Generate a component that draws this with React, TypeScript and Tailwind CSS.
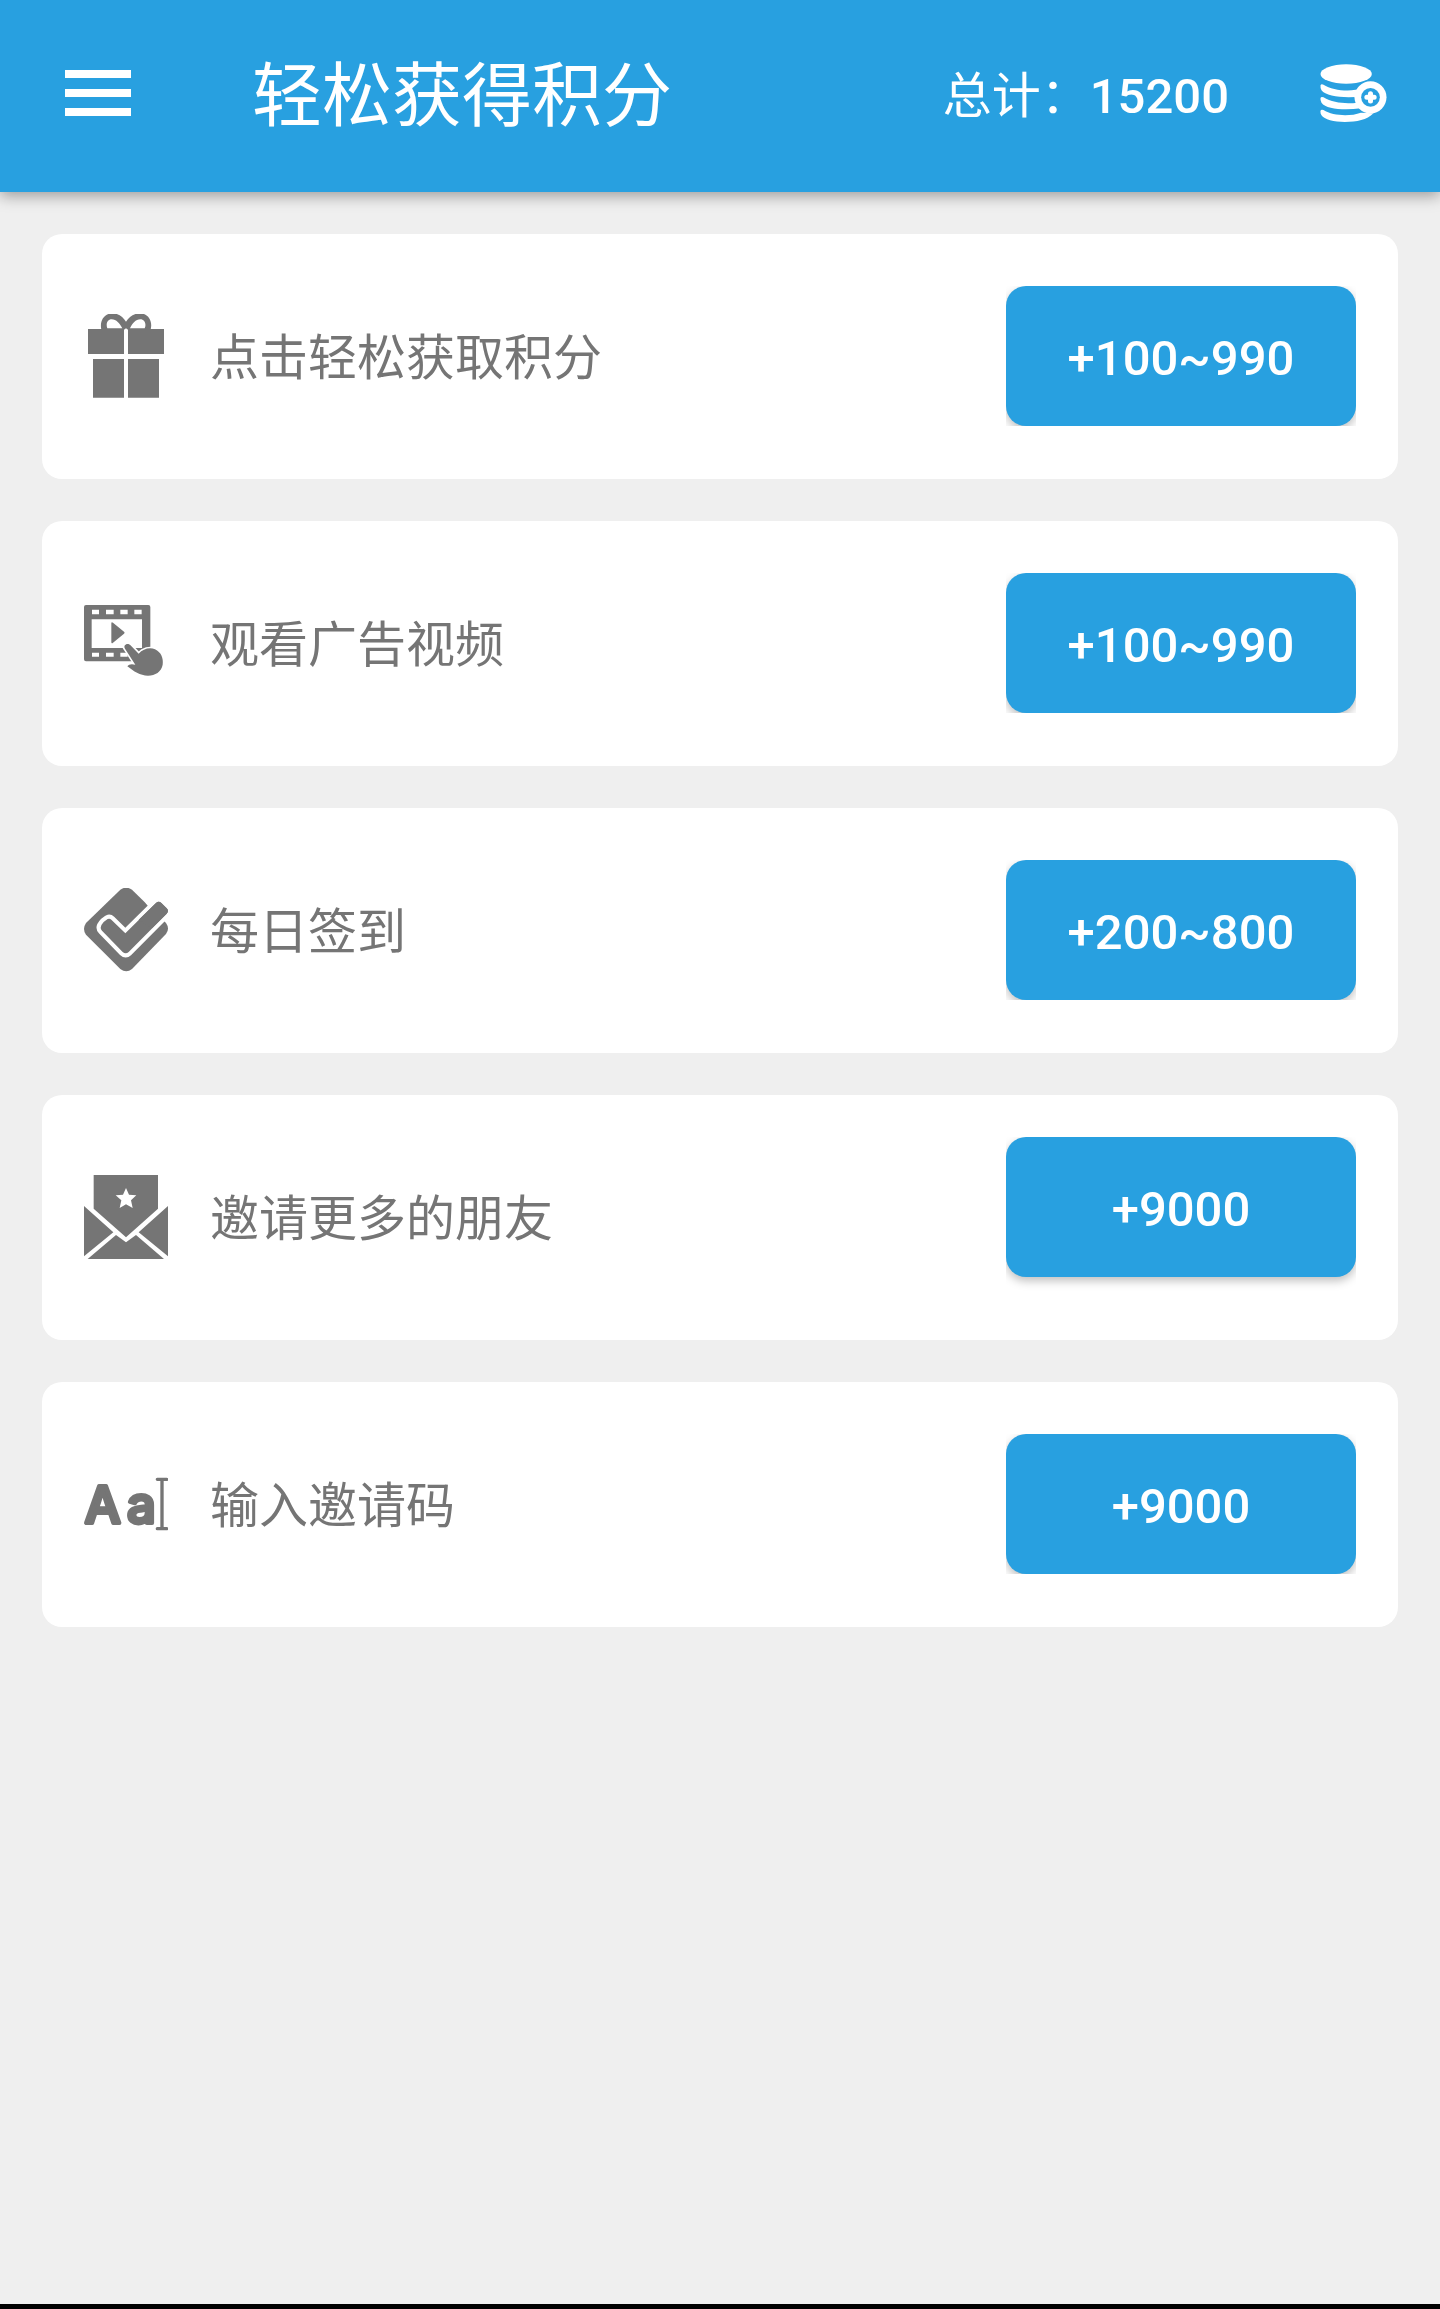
import type { ReactNode } from 'react';
import clsx from 'clsx';

type Task = {
  id: string;
  label: string;
  reward: string;
  icon: ReactNode;
  raised?: boolean;
};

const GiftIcon = () => (
  <svg viewBox="42 43 252 252" className="size-full" fill="currentColor" aria-hidden="true">
    <path d="M54 88h108v75H54zM174 88h108v75H174zM69 178h93v116H69zM174 178h93v116h-93z" />
    <path
      fillRule="evenodd"
      d="M94 90C88 62 104 41 127 41c20 0 32 12 41 25 9-13 22-25 42-25 23 0 39 21 32 49h-68l-6-4-6 4zM112 86h45c-8-14-18-27-32-27-13 0-18 14-13 27zM180 86h44c6-13 0-27-13-27-14 0-24 13-31 27z"
    />
  </svg>
);

const VideoIcon = () => (
  <svg viewBox="42 32 252 252" className="size-full" fill="currentColor" aria-hidden="true">
    <path
      fillRule="evenodd"
      d="M48 44h187q6 0 6 6v157q0 6-6 6H48q-6 0-6-6V50q0-6 6-6zM66 58v14h21V58zM108 58v14h23V58zM151 58v14h22V58zM193 58v14h22V58zM65 87v86h151V87zM66 187v12h21v-12zM108 187v12h23v-12zM151 187v12h22v-12z"
    />
    <path d="M124 99q0-5 5-2l33 27q4 3 0 6l-33 27q-5 4-5-2z" />
    <path
      d="M165 165c5-6 13-4 18 1l23 24c13-14 33-20 49-13 18 8 26 27 23 46-4 21-22 33-44 33-24 0-43-13-62-28 4-7 14-8 24-5l-31-48c-3-4-2-8 0-10z"
      stroke="white"
      strokeWidth="10"
      paintOrder="stroke"
    />
  </svg>
);

const CheckinIcon = () => (
  <svg viewBox="42 40 252 252" className="size-full" aria-hidden="true">
    <path
      fill="currentColor"
      d="M151 45q17-12 35 0l102 100q12 17 0 33L186 283q-17 14-35 0L48 180q-12-17 0-35z"
    />
    <path
      fill="currentColor"
      stroke="white"
      strokeWidth="24"
      strokeLinejoin="round"
      paintOrder="stroke"
      d="M101 142l12-9q6-3 11 2l42 41 92-91q8-8 16 0l16 16q8 8 0 16L176 232q-9 8-18 0L96 168q-10-10 5-26z"
    />
    <path fill="white" d="M226 84l22-22 20 8-32 26z" />
    <path fill="currentColor" d="M258 85q8-8 16 0l16 16q8 8 0 16l-44 44-40-26z" />
  </svg>
);

const InviteIcon = () => (
  <svg viewBox="42 45 252 252" className="size-full" fill="currentColor" aria-hidden="true">
    <path
      fillRule="evenodd"
      d="M71 45h193v101l-96 86-97-86zM168 84l-9 20-22 2 17 15-5 23 19-11 20 11-5-23 16-15-22-2z"
    />
    <path d="M42 138l88 79-88 72zM294 138l-88 79 88 72zM138 225l30 22 30-22 84 72H53z" />
  </svg>
);

const CodeIcon = () => (
  <svg viewBox="42 6 252 252" className="size-full" fill="currentColor" stroke="currentColor" aria-hidden="true">
    <text
      y="188"
      fontSize="152"
      strokeWidth="12"
      strokeLinejoin="round"
      className="font-[Inter] font-medium"
    >
      <tspan x="44">A</tspan>
      <tspan x="171">a</tspan>
    </text>
    <path d="M262 58h28M276 58v148M262 206h28" fill="none" strokeWidth="10" strokeLinecap="round" />
  </svg>
);

const CoinsIcon = () => (
  <svg viewBox="62 68 200 174" className="h-[58px] w-[67px]" fill="currentColor" aria-hidden="true">
    <ellipse cx="140" cy="98" rx="77" ry="29" />
    <path d="M63 132q2-5 9-2c28 18 84 23 118 10v25c-50 6-110 2-124-18q-4-6-3-15z" />
    <path d="M63 170q2-5 9-2c28 18 70 20 102 16l10 17c-50 6-104 3-118-17q-4-6-3-14z" />
    <path d="M63 208q2-5 9-2c28 18 80 20 112 8l38 2c-20 20-50 26-86 26-32 0-62-7-70-20q-4-6-3-14z" />
    <circle cx="213" cy="168" r="48" />
    <circle cx="213" cy="168" r="28" className="fill-[#28a0e0]" />
    <path d="M213 157v22M202 168h22" stroke="currentColor" strokeWidth="15" strokeLinecap="round" />
  </svg>
);

const tasks: Task[] = [
  { id: 'click', label: '点击轻松获取积分', reward: '+100~990', icon: <GiftIcon /> },
  { id: 'video', label: '观看广告视频', reward: '+100~990', icon: <VideoIcon /> },
  { id: 'checkin', label: '每日签到', reward: '+200~800', icon: <CheckinIcon /> },
  { id: 'invite', label: '邀请更多的朋友', reward: '+9000', icon: <InviteIcon />, raised: true },
  { id: 'code', label: '输入邀请码', reward: '+9000', icon: <CodeIcon /> },
];

const Header = () => {
  return (
    <header className="relative flex h-48 items-center bg-[#28a0e0] pr-[53px] pl-[65px] text-white shadow-[0_4px_14px_rgba(0,0,0,0.35)]">
      <button type="button" aria-label="菜单" className="mb-[7px] flex w-[66px] flex-col gap-[11px]">
        <span className="h-2 bg-white" />
        <span className="h-2 bg-white" />
        <span className="h-2 bg-white" />
      </button>
      <h1 className="ml-[121px] pt-0.5 text-[70px] leading-[84px]">轻松获得积分</h1>
      <p className="ml-auto pt-0.5 text-[49px] leading-[60px]">
        总计：<span className="font-medium">15200</span>
      </p>
      <button type="button" aria-label="积分" className="mb-[7px] ml-[91px]">
        <CoinsIcon />
      </button>
    </header>
  );
};

const TaskCard = ({ task }: { task: Task }) => {
  return (
    <li className="flex h-[245px] items-center rounded-[20px] bg-white px-[42px] pb-px text-[#757575]">
      <div className="size-[84px] shrink-0">{task.icon}</div>
      <span id={task.id} className="ml-[42px] pt-1.5 text-[49px] leading-[60px]">
        {task.label}
      </span>
      {/* the wrapper clips the button shadow */}
      <div className={clsx('ml-auto overflow-hidden', task.raised && 'pb-5')}>
        <button
          type="button"
          aria-describedby={task.id}
          className="block h-[140px] w-[350px] rounded-[20px] bg-[#28a0e0] pt-1.5 text-[49px] leading-[60px] font-medium text-white shadow-[0_4px_10px_rgba(0,0,0,0.25)]"
        >
          {task.reward}
        </button>
      </div>
    </li>
  );
};

const App = () => {
  return (
    <div className="flex min-h-screen flex-col bg-[#efefef] font-[Roboto,'Noto_Sans_CJK_SC',sans-serif]">
      <Header />
      <main className="grow p-[42px]">
        <ul className="flex flex-col gap-[42px]">
          {tasks.map((task) => (
            <TaskCard key={task.id} task={task} />
          ))}
        </ul>
      </main>
      <div className="h-[5px] bg-black" />
    </div>
  );
};

export default App;
